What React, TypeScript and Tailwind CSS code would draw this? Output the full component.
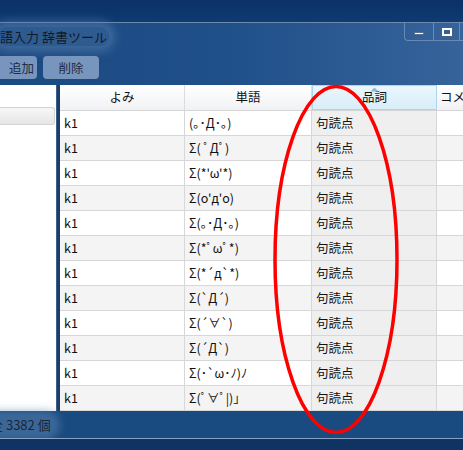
import React from "react";

const words = [
  "(｡･Д･｡)",
  "Σ( ﾟДﾟ)",
  "Σ(*'ω'*)",
  "Σ(o'д'o)",
  "Σ(｡･Д･｡)",
  "Σ(*ﾟωﾟ*)",
  "Σ(*´д`*)",
  "Σ(`Д´)",
  "Σ(´∀`)",
  "Σ(´Д`)",
  "Σ(･`ω･ﾉ)ﾉ",
  "Σ(ﾟ∀ﾟ|)」",
];

const font = { fontFamily: '"Noto Sans CJK JP", "Noto Sans", sans-serif' };

export default function App() {
  return (
    <div
      className="relative w-[463px] h-[450px] overflow-hidden flex flex-col bg-[#0e386e] text-[#111]"
      style={font}
    >
      <div className="h-[22px] shrink-0 bg-gradient-to-b from-[#0b3168] to-[#0f3a72]" />
      <div className="h-[1px] shrink-0 bg-[#6d89ad]" />
      {/* window frame */}
      <div className="h-[62px] shrink-0 flex flex-col bg-gradient-to-r from-[#1b4982] via-[#20508a] to-[#36639a]">
        <div className="flex justify-between h-[33px]">
          <div>
            <span className="text-[13px] leading-[24px] text-[#111a26] ml-[-2px] px-[2px] rounded-[10px] bg-[#3a6597]/60 shadow-[0_0_10px_6px_rgba(90,130,175,0.55)] whitespace-nowrap">
              語入力 辞書ツール
            </span>
          </div>
          <div className="flex h-[18px] border-l border-b border-[#7f9cc0]/70 rounded-bl-[4px]">
            <div className="w-[29px] flex items-center justify-center border-r border-[#7f9cc0]/70">
              <div className="w-[10px] h-[3px] bg-white border border-[#5a6f8a] mt-[4px]" />
            </div>
            <div className="w-[26px] flex items-center justify-center border-r border-[#7f9cc0]/70">
              <div className="w-[10px] h-[8px] border-[2px] border-white outline outline-1 outline-[#4a5f7a]" />
            </div>
            <div className="w-[3px]" />
          </div>
        </div>
        <div className="flex gap-[6px] h-[23px]">
          <div className="w-[37px] h-[23px] rounded-r-[4px] bg-[#7895bd] text-[12.5px] leading-[23px] text-[#1d2d45] flex justify-end pr-[3px]">
            追加
          </div>
          <div className="w-[56px] h-[23px] rounded-[4px] bg-[#7895bd] text-[12.5px] leading-[23px] text-[#1d2d45] flex justify-center">
            削除
          </div>
        </div>
      </div>
      {/* content */}
      <div className="h-[326px] shrink-0 flex">
        <div className="w-[56px] shrink-0 bg-white pt-[22px]">
          <div className="h-[18px] w-[55px] rounded-r-[3px] border border-l-0 border-[#d3d3d3] bg-gradient-to-b from-[#f7f7f7] to-[#e6e6e6]" />
        </div>
        <div className="w-[4px] shrink-0 bg-[#1e3e69] border-l border-[#3d5f8a]" />
        <div className="flex-1 min-w-0 overflow-hidden bg-white flex flex-col text-[12.5px]">
          <div className="h-[26px] shrink-0 flex border-b border-[#d5d5d5] bg-gradient-to-b from-white to-[#f1f2f4]">
            <div className="w-[125px] shrink-0 border-r border-[#dcdcdc] flex items-center justify-center">よみ</div>
            <div className="w-[127px] shrink-0 border-r border-[#dcdcdc] flex items-center justify-center">単語</div>
            <div className="relative w-[125px] shrink-0 border border-[#a9d6ef] bg-gradient-to-b from-[#eaf6fc] to-[#d9eef9] flex items-center justify-center">
              <svg className="absolute top-[1px] left-[57px]" width="9" height="5" viewBox="0 0 9 5">
                <path d="M0.5 4.5 L4.5 0.5 L8.5 4.5 Z" fill="#8fb8d4" />
              </svg>
              品詞
            </div>
            <div className="flex-1 min-w-0 flex items-center pl-[3px] whitespace-nowrap overflow-hidden">コメ</div>
          </div>
          {words.map((w, i) => (
            <div
              key={i}
              className={`h-[25px] shrink-0 flex border-b border-[#d7d7d7] ${i % 2 === 1 ? "bg-[#f4f4f4]" : "bg-white"}`}
            >
              <div className="w-[125px] shrink-0 border-r border-[#d7d7d7] pl-[4px] leading-[24px]">k1</div>
              <div className="w-[127px] shrink-0 border-r border-[#d7d7d7] pl-[4px] leading-[24px] whitespace-nowrap overflow-hidden">{w}</div>
              <div className="w-[125px] shrink-0 border-r border-[#d7d7d7] bg-[#efefef] pl-[4px] leading-[24px]">句読点</div>
              <div className="flex-1" />
            </div>
          ))}
        </div>
      </div>
      {/* status */}
      <div className="h-[27px] shrink-0 bg-[#1a4b80] flex items-center">
        <span className="text-[13px] leading-[18px] ml-[-13px] px-[3px] text-[#1c2636] rounded-[8px] bg-[#4a73a2]/70 shadow-[0_0_8px_5px_rgba(90,130,175,0.6)] whitespace-nowrap">
          全 3382 個
        </span>
      </div>
      <div className="h-[1px] shrink-0 bg-[#8aa2c0]" />
      <div className="flex-1 bg-[#0f3463]" />

      <svg className="absolute left-0 top-0 pointer-events-none" width="463" height="450" viewBox="0 0 463 450">
        <ellipse cx="336" cy="259.5" rx="61" ry="173" fill="none" stroke="#ff0000" strokeWidth="3.5" />
      </svg>
    </div>
  );
}
